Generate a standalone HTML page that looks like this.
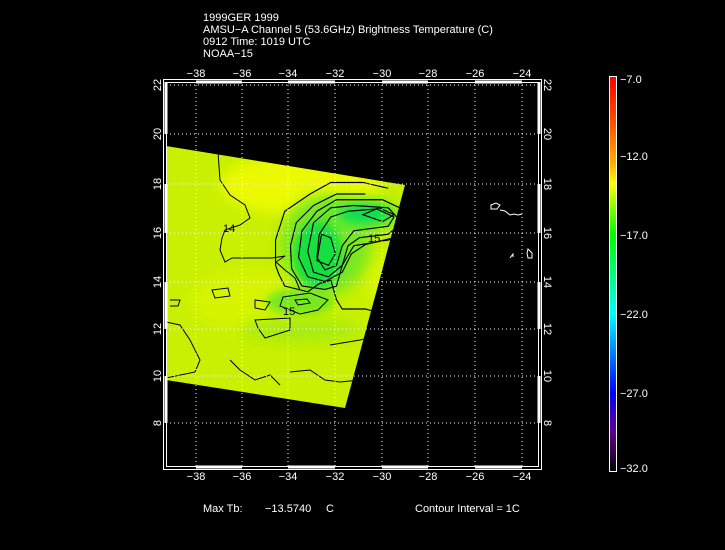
<!DOCTYPE html>
<html><head><style>
html,body{margin:0;padding:0;background:#000;width:725px;height:550px;overflow:hidden}
svg{display:block}
text{font-family:"Liberation Sans",sans-serif;fill:#fff;font-size:11px}
</style></head><body>
<svg width="725" height="550" viewBox="0 0 725 550" xmlns="http://www.w3.org/2000/svg">
<defs>
<clipPath id="dc"><polygon points="166,146 405,185 345,408 166,380"/></clipPath>
<filter id="bl" x="-50%" y="-50%" width="200%" height="200%"><feGaussianBlur stdDeviation="7"/></filter>
<filter id="bl2" x="-50%" y="-50%" width="200%" height="200%"><feGaussianBlur stdDeviation="4"/></filter>
<linearGradient id="cb" x1="0" y1="0" x2="0" y2="1">
<stop offset="0" stop-color="#ff0000"/>
<stop offset="0.12" stop-color="#ff5000"/>
<stop offset="0.22" stop-color="#ffb000"/>
<stop offset="0.27" stop-color="#ffff00"/>
<stop offset="0.4" stop-color="#00ff00"/>
<stop offset="0.48" stop-color="#00ff60"/>
<stop offset="0.6" stop-color="#00ffff"/>
<stop offset="0.8" stop-color="#0000ff"/>
<stop offset="0.9" stop-color="#600090"/>
<stop offset="1" stop-color="#000000"/>
</linearGradient>
</defs>
<text x="203" y="21">1999GER 1999</text>
<text x="203" y="33">AMSU−A Channel 5 (53.6GHz) Brightness Temperature (C)</text>
<text x="203" y="45">0912 Time: 1019 UTC</text>
<text x="203" y="57">NOAA−15</text>

<g clip-path="url(#dc)">
<rect x="160" y="140" width="260" height="280" fill="#c8f000"/>
<ellipse cx="300" cy="185" rx="80" ry="30" fill="#ecfa00" filter="url(#bl)"/>
<ellipse cx="250" cy="300" rx="60" ry="30" fill="#d6f400" filter="url(#bl)"/>
<ellipse cx="385" cy="280" rx="22" ry="25" fill="#d8f600" filter="url(#bl)"/>
<ellipse cx="325" cy="245" rx="45" ry="50" fill="#78e820" filter="url(#bl)"/>
<ellipse cx="360" cy="215" rx="40" ry="17" fill="#60e830" filter="url(#bl)"/>
<ellipse cx="318" cy="255" rx="24" ry="34" fill="#18e040" filter="url(#bl2)"/>
<ellipse cx="365" cy="214" rx="25" ry="9" fill="#10e050" filter="url(#bl2)"/>
<ellipse cx="300" cy="302" rx="34" ry="14" fill="#78e820" filter="url(#bl2)"/>
<ellipse cx="300" cy="330" rx="60" ry="12" fill="#a8ec10" filter="url(#bl)"/>
</g>
<g fill="none" stroke="#000" stroke-width="1" clip-path="url(#dc)">
<path d="M218,152 L220,180 L230,195 L245,205 L250,218 L240,225 L225,230 L222,238 L220,250 L225,262 L232,258 L255,258 L272,258 L285,256 L276,262 L285,270 L295,278 L300,290"/>
<g transform="translate(325,240) scale(1.15) translate(-325,-240)">
<path d="M380,195 L358,190 L330,190 L312,200 L290,215 L282,240 L282,262 L285,270 L290,280 L310,285 L320,278 L330,275 L335,292 L340,300 L360,300 L405,312"/>
<path d="M360,200 L335,200 L315,210 L300,225 L295,245 L296,265 L305,280 L325,283 L335,280 L340,262 L350,245 L380,240 L400,235"/>
<path d="M355,205 L335,205 L318,215 L305,232 L302,255 L310,272 L325,276 L340,268 L348,252 L360,244 L385,238 L398,225 L390,212 L375,205 Z"/>
<path d="M350,210 L330,212 L315,225 L310,250 L315,268 L328,272 L340,262 L345,245 L355,238 L380,235 L392,225 L380,212 Z"/>
<path d="M345,215 L330,220 L320,235 L318,255 L325,266 L335,262 L340,245 L350,232 L380,228 L385,220 L370,213 Z"/>
<path d="M322,235 L318,258 L328,262 L334,252 L330,238 Z"/>
<path d="M358,218 L372,212 L385,218 L375,224 Z"/>
</g>
<path d="M283,297 L310,293 L328,300 L318,310 L300,314 L280,306 Z"/>
<path d="M295,300 L307,299 L310,303 L298,305 Z"/>
<path d="M212,290 L228,288 L230,296 L215,298 Z"/>
<path d="M255,300 L270,302 L265,310 L255,308 Z"/>
<path d="M255,320 L290,318 L290,330 L265,338 L258,328 Z"/>
<path d="M166,322 L180,325 L190,340 L200,360 L195,372 L166,378"/>
<path d="M170,300 L180,300 L178,306 L170,306"/>
<path d="M290,372 L310,370 L325,380 L340,382 L360,380"/>
<path d="M330,345 L360,340 L400,330"/>
<path d="M230,360 L240,370 L255,380 L270,375 L280,385"/>
</g>
<text x="223" y="232" style="fill:#000">14</text>
<text x="368" y="242" style="fill:#000">15</text>
<text x="283" y="315" style="fill:#000">15</text>

<g stroke="#fff" stroke-width="1" stroke-dasharray="1,3" fill="none">
<path d="M196,85V467M242,85V467M288,85V467M335,85V467M382,85V467M428,85V467M475,85V467M522,85V467"/>
<path d="M166,85H539M166,134H539M166,184H539M166,233H539M166,282H539M166,329H539M166,376H539M166,423H539"/>
</g>
<g fill="none" stroke="#fff" stroke-width="1">
<path d="M491,205 L496,203 L500,205 L497,209 L491,209 Z"/>
<path d="M500,210 L505,211 L510,215 L514,214 L518,215 L522,214"/>
<path d="M513,257 L513,254 L510,258"/>
<path d="M528,249 L532,253 L532,258 L528,258 L527,253 Z"/>
</g>
<rect x="163.5" y="79.5" width="378" height="390" fill="none" stroke="#fff"/>
<rect x="166.5" y="82.5" width="372" height="384" fill="none" stroke="#fff"/>
<g stroke="#fff" stroke-width="3">
<path d="M196,82H242M288,82H335M382,82H428M475,82H522"/>
<path d="M196,467H242M288,467H335M382,467H428M475,467H522"/>
<path d="M166,82V134M166,184V233M166,282V329M166,376V423"/>
<path d="M539,82V134M539,184V233M539,282V329M539,376V423"/>
</g>
<g text-anchor="middle">
<text x="196" y="77">−38</text><text x="242" y="77">−36</text><text x="288" y="77">−34</text><text x="335" y="77">−32</text><text x="382" y="77">−30</text><text x="428" y="77">−28</text><text x="475" y="77">−26</text><text x="522" y="77">−24</text>
<text x="196" y="480">−38</text><text x="242" y="480">−36</text><text x="288" y="480">−34</text><text x="335" y="480">−32</text><text x="382" y="480">−30</text><text x="428" y="480">−28</text><text x="475" y="480">−26</text><text x="522" y="480">−24</text>
</g>
<g font-size="10">
<text transform="translate(161,85) rotate(-90)" text-anchor="middle">22</text>
<text transform="translate(161,134) rotate(-90)" text-anchor="middle">20</text>
<text transform="translate(161,184) rotate(-90)" text-anchor="middle">18</text>
<text transform="translate(161,233) rotate(-90)" text-anchor="middle">16</text>
<text transform="translate(161,282) rotate(-90)" text-anchor="middle">14</text>
<text transform="translate(161,329) rotate(-90)" text-anchor="middle">12</text>
<text transform="translate(161,376) rotate(-90)" text-anchor="middle">10</text>
<text transform="translate(161,423) rotate(-90)" text-anchor="middle">8</text>
<text transform="translate(544,85) rotate(90)" text-anchor="middle">22</text>
<text transform="translate(544,134) rotate(90)" text-anchor="middle">20</text>
<text transform="translate(544,184) rotate(90)" text-anchor="middle">18</text>
<text transform="translate(544,233) rotate(90)" text-anchor="middle">16</text>
<text transform="translate(544,282) rotate(90)" text-anchor="middle">14</text>
<text transform="translate(544,329) rotate(90)" text-anchor="middle">12</text>
<text transform="translate(544,376) rotate(90)" text-anchor="middle">10</text>
<text transform="translate(544,423) rotate(90)" text-anchor="middle">8</text>
</g>
<rect x="609.5" y="76.5" width="7" height="395" fill="url(#cb)" stroke="#fff"/>
<text x="620" y="83">−7.0</text>
<text x="620" y="160">−12.0</text>
<text x="620" y="239">−17.0</text>
<text x="620" y="318">−22.0</text>
<text x="620" y="397">−27.0</text>
<text x="620" y="472">−32.0</text>
<text x="203" y="512">Max Tb:</text>
<text x="265" y="512">−13.5740</text>
<text x="326" y="512">C</text>
<text x="415" y="512">Contour Interval = 1C</text>
</svg>
</body></html>
